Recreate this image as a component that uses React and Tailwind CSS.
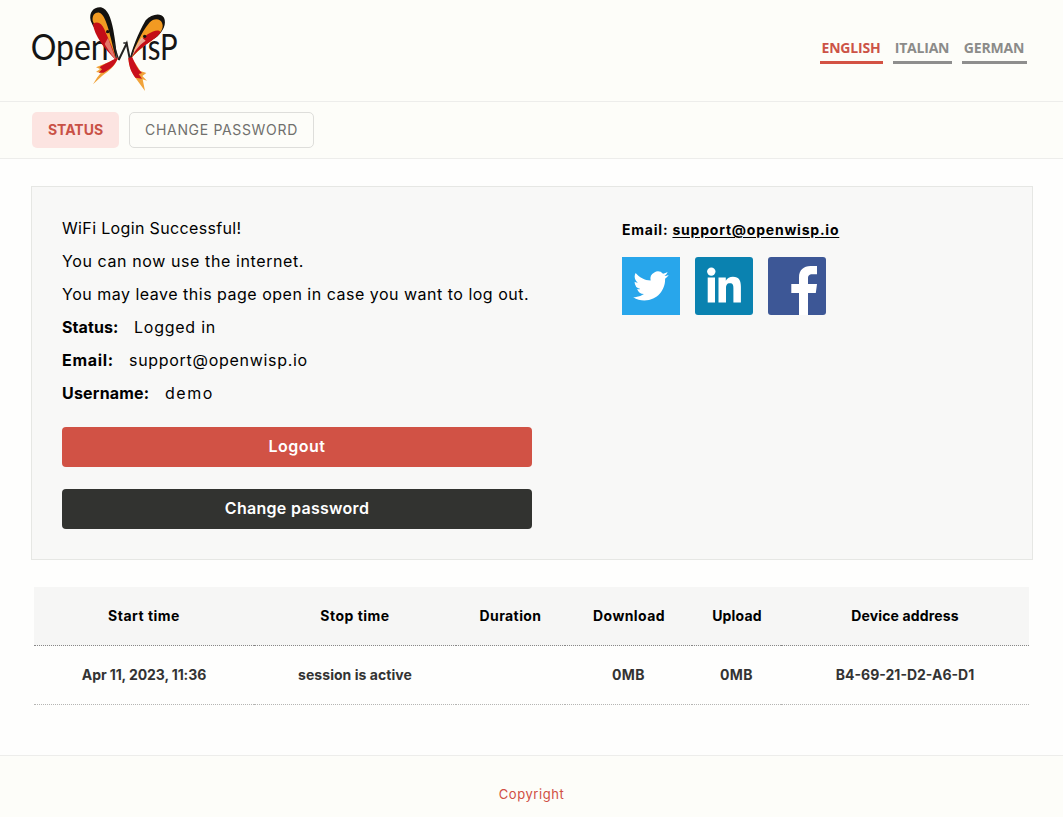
function Logo() {
  return (
    <svg className="block h-[100px] w-[170px]" viewBox="0 0 510 300" role="img" aria-label="OpenWISP">
      <g fontFamily="Lato, sans-serif" fill="#151515">
        <text x="32" y="181" fontSize="111" textLength="234" lengthAdjust="spacingAndGlyphs">Open</text>
        <text x="362" y="181" fontSize="111" textLength="111" lengthAdjust="spacingAndGlyphs">isP</text>
      </g>
      <path d="M291 182C272 143 224 96 212 62C206 36 222 20 243 22C263 27 273 53 280 90C286 124 290 153 291 182Z" fill="#141210" />
      <path d="M288 176C260 127 226 86 218 62C216 45 226 36 238 38C258 44 268 96 288 176Z" fill="#f29a22" />
      <path d="M289 182C253 145 223 108 219 72C232 62 245 69 253 88C264 115 279 143 289 182Z" fill="#c40d17" />
      <path d="M264 114L289 182C274 165 266 152 254 132Z" fill="#ee9a85" opacity=".75" />
      <circle cx="263" cy="95" r="5" fill="#141210" />
      <path d="M328 182C336 148 354 100 377 61C394 43 421 37 432 53C440 71 430 93 411 110C380 130 345 157 328 182Z" fill="#141210" />
      <path d="M330 180C344 144 363 98 388 68C401 53 421 55 426 68C435 88 414 106 397 119C370 138 347 157 330 180Z" fill="#f29a22" />
      <path d="M328 182C344 155 358 119 383 103C402 90 417 88 422 96C407 123 358 137 328 182Z" fill="#c40d17" />
      <path d="M330 180C341 151 352 130 365 112L377 122C354 137 342 158 330 180Z" fill="#f0c0a6" opacity=".85" />
      <circle cx="374" cy="109" r="5" fill="#141210" />
      <path d="M296 180L320 130L330 180" stroke="#252322" strokeWidth="6" fill="none" />
      <path d="M280 128L296 180M330 180L340 152M310 129H322" stroke="#252322" strokeWidth="4" fill="none" />
      <path d="M294 174L258 190L228 202L240 207L228 216L243 218L232 232L219 253L246 228C266 213 286 198 294 174Z" fill="#f1a33a" />
      <path d="M294 172C272 184 251 193 239 202L246 208L236 218L251 218C271 208 288 194 294 172Z" fill="#c9101c" />
      <path d="M325 174C327 202 337 221 351 240L375 273L368 238L381 242L367 228L379 219L361 213C352 200 345 188 336 174Z" fill="#f1a33a" />
      <path d="M325 174C327 201 333 215 346 233L366 236L356 222L366 219C352 206 345 190 336 170Z" fill="#c9101c" />
    </svg>
  );
}

const languages = [
  { label: "ENGLISH", style: "w-[63px] border-[#d35244] text-[#cc5347]" },
  { label: "ITALIAN", style: "w-[59px] border-[#8e8e8e] text-[#8b8b89]" },
  { label: "GERMAN", style: "w-[65px] border-[#8e8e8e] text-[#8b8b89]" },
];

const details = [
  { name: "Status:", value: "Logged in", label: "w-[72px] tracking-[0.1px]", track: "tracking-[0.75px]" },
  { name: "Email:", value: "support@openwisp.io", label: "w-[67px] tracking-[0.7px]", track: "tracking-[0.7px]" },
  { name: "Username:", value: "demo", label: "w-[103px] tracking-[0.2px]", track: "tracking-[1.5px]" },
];

function Social() {
  return (
    <div className="mt-[17px] flex gap-[15px]">
      <svg className="size-[58px]" viewBox="0 0 58 58">
        <path fill="#28a6eb" d="M0 0h58v58H0z" />
        <path transform="translate(11.2 11.2) scale(1.48)" fill="#fff" d="M23.953 4.57a10 10 0 01-2.825.775 4.958 4.958 0 002.163-2.723c-.951.555-2.005.959-3.127 1.184a4.92 4.92 0 00-8.384 4.482C7.69 8.095 4.067 6.13 1.64 3.162a4.822 4.822 0 00-.666 2.475c0 1.71.87 3.213 2.188 4.096a4.904 4.904 0 01-2.228-.616v.06a4.923 4.923 0 003.946 4.827 4.996 4.996 0 01-2.212.085 4.936 4.936 0 004.604 3.417 9.867 9.867 0 01-6.102 2.105c-.39 0-.779-.023-1.17-.067a13.995 13.995 0 007.557 2.209c9.053 0 13.998-7.496 13.998-13.985 0-.21 0-.42-.015-.63A9.935 9.935 0 0024 4.59z" />
      </svg>
      <svg className="size-[58px]" viewBox="0 0 58 58">
        <rect width="58" height="58" rx="3" fill="#0a82b0" />
        <g fill="#fff">
          <circle cx="16.3" cy="14.600" r="4.200" />
          <path d="M12.700 20.500h7.300v24.900h-7.300zM23.500 20.500h7.300v3.200c1.400-2.500 4-3.900 7.100-3.900 6.300 0 8 4.100 8 10.300v15.300h-7.500V31.500c0-3.200-.4-5.200-3.500-5.200s-3.900 2-3.900 5.200v13.900h-7.500z" />
        </g>
      </svg>
      <svg className="size-[58px]" viewBox="0 0 58 58">
        <rect width="58" height="58" rx="3" fill="#3d5796" />
        <path fill="#fff" d="M31 58V36h-7.700v-9H31v-6.500C31 13 35.700 9 42.500 9H49v8.200h-4.500c-3.700 0-4.500 1.800-4.500 4.300V27h9l-1.200 9H40v22z" />
      </svg>
    </div>
  );
}

const columns = [
  { head: "Start time", value: "Apr 11, 2023, 11:36", width: "w-[220px] tracking-[0.5px]", track: "tracking-[-0.1px]" },
  { head: "Stop time", value: "session is active", width: "w-[202px] tracking-[0.5px]", track: "tracking-[0.05px]" },
  { head: "Duration", value: "", width: "w-[109px] tracking-[0.4px]", track: "" },
  { head: "Download", value: "0MB", width: "w-[127px] pl-px tracking-[0.4px]", track: "tracking-[0.4px]" },
  { head: "Upload", value: "0MB", width: "w-[89px] pl-px tracking-[0.2px]", track: "tracking-[0.4px]" },
  { head: "Device address", value: "B4-69-21-D2-A6-D1", width: "w-[248px] tracking-[0.15px]", track: "" },
];

export default function App() {
  return (
    <div className="flex h-[817px] w-[1063px] flex-col overflow-hidden bg-[#fefefd] font-['Inter',sans-serif] text-black">
      <header className="flex h-[102px] shrink-0 items-start justify-between border-b border-[#ededeb] bg-[#fdfdf9] pl-5 pr-9">
        <Logo />
        <nav className="mt-[37px] flex gap-[10px] font-['Open_Sans',sans-serif] text-[14px] font-bold tracking-[-0.2px]">
          {languages.map((l) => (
            <a key={l.label} className={`flex h-[27px] justify-center border-b-[3px] pr-px leading-[22px] whitespace-nowrap ${l.style}`}>{l.label}</a>
          ))}
        </nav>
      </header>
      <nav className="flex h-[57px] shrink-0 gap-[10px] border-b border-[#ededeb] bg-[#fdfdf9] pl-8 pt-[10px] text-[14px]">
        <a className="flex h-9 w-[87px] items-center justify-center rounded-[5px] bg-[#fce4e1] pb-0.5 font-bold text-[#c95146]">STATUS</a>
        <a className="flex h-9 w-[185px] items-center justify-center rounded-[5px] border border-[#dededb] pb-0.5 tracking-[0.67px] text-[#70706d]">CHANGE PASSWORD</a>
      </nav>
      <main className="flex grow flex-col">
        <section className="ml-[31px] mt-[27px] flex h-[374px] w-[1002px] shrink-0 border border-[#e6e7e4] bg-[#f8f8f7] pl-[30px]">
          <div className="w-[470px] pt-[25px] text-[16px] leading-[33px] whitespace-nowrap">
            <p className="tracking-[0.35px]">WiFi Login Successful!</p>
            <p className="tracking-[0.6px]">You can now use the internet.</p>
            <p className="tracking-[0.5px]">You may leave this page open in case you want to log out.</p>
            {details.map((d) => (
              <p key={d.name} className="flex">
                <strong className={`shrink-0 ${d.label}`}>{d.name}</strong>
                <span className={d.track}>{d.value}</span>
              </p>
            ))}
            <button className="mt-[17px] block h-10 w-full rounded-[4px] bg-[#d15245] pb-[2px] font-semibold leading-[38px] tracking-[0.5px] text-white">Logout</button>
            <button className="mt-[22px] block h-10 w-full rounded-[4px] bg-[#323330] pb-[2px] font-semibold leading-[38px] tracking-[0.3px] text-white">Change password</button>
          </div>
          <div className="ml-[90px] pt-[33px]">
            <p className="text-[14px] font-bold leading-5 tracking-[0.78px] whitespace-nowrap">Email: <a className="underline underline-offset-2">support@openwisp.io</a></p>
            <Social />
          </div>
        </section>
        <table className="ml-[34px] mt-[27px] w-[995px] table-fixed border-separate border-spacing-0 text-[14px]">
          <thead className="bg-[#f6f6f5]">
            <tr className="h-[59px]">
              {columns.map((c) => <th key={c.head} className={`border-b border-dotted border-[#888] pb-0.5 font-bold ${c.width}`}>{c.head}</th>)}
            </tr>
          </thead>
          <tbody>
            <tr className="h-[59px] text-center font-bold text-[#333]">
              {columns.map((c) => <td key={c.head} className={`border-b border-dotted border-[#b5b5b3] pb-0.5 ${c.track}`}>{c.value}</td>)}
            </tr>
          </tbody>
        </table>
      </main>
      <footer className="flex h-[62px] shrink-0 justify-center border-t border-[#ededeb] bg-[#fdfdf9] pt-[28px] text-[13px] leading-5 tracking-[0.55px] text-[#d04f43]">
        <a>Copyright</a>
      </footer>
    </div>
  );
}
